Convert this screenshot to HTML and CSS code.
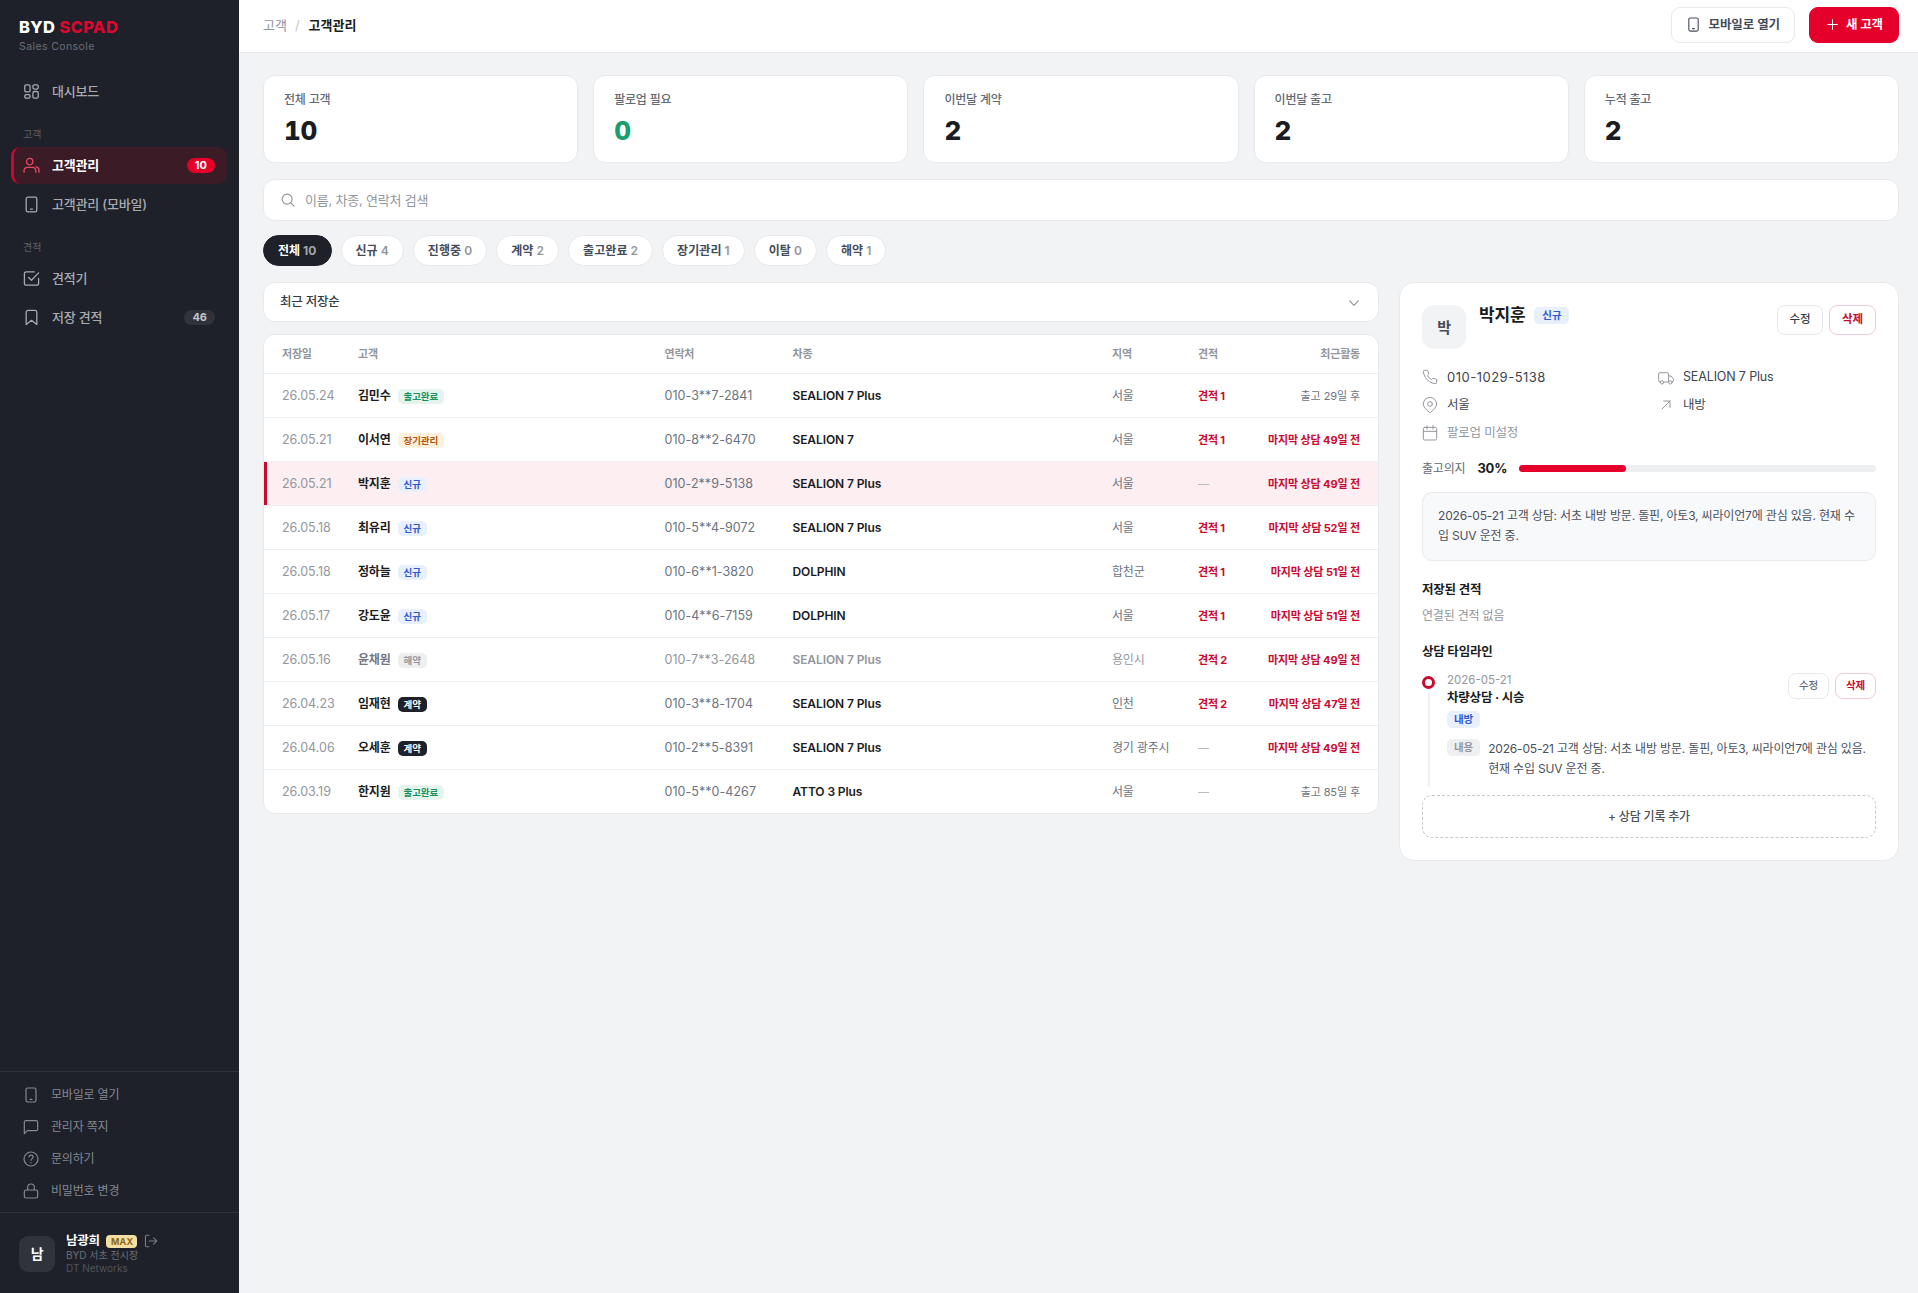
FILE: index.html
```html
<!DOCTYPE html>
<html lang="ko">
<head>
    <meta charset="UTF-8">
    <meta name="viewport" content="width=device-width, initial-scale=1.0">
    <title>고객관리 - BYD SCPAD</title>
    <link rel="stylesheet" href="styles.css">
</head>
<body>
    <svg class="sprite" width="0" height="0">
        <symbol id="i-dashboard" viewBox="0 0 24 24"><rect x="2.5" y="2.5" width="7.5" height="10" rx="2"/><rect x="14" y="2.5" width="7.5" height="6" rx="2"/><rect x="2.5" y="16.5" width="7.5" height="5" rx="2"/><rect x="14" y="12" width="7.5" height="9.5" rx="2"/></symbol>
        <symbol id="i-users" viewBox="0 0 24 24"><circle cx="9.5" cy="6.5" r="4.5"/><path d="M1.5 21.5V19A4.5 4.5 0 0 1 6 14.5h7.5A4.5 4.5 0 0 1 18 19v2.5"/><path d="M18.5 14c2.6.3 4 2 4 4.5v3"/></symbol>
        <symbol id="i-mobile" viewBox="0 0 24 24"><rect x="4.5" y="1.5" width="15" height="21" rx="2.5"/><path d="M10.5 18.500h3"/></symbol>
        <symbol id="i-check" viewBox="0 0 24 24"><path d="M8 10.5l4 4L22 4"/><path d="M22 12v7a2.5 2.5 0 0 1-2.5 2.500h-15A2.5 2.5 0 0 1 2 19V5a2.5 2.5 0 0 1 2.5-2.500H16"/></symbol>
        <symbol id="i-bookmark" viewBox="0 0 24 24"><path d="M19.5 22L12 16l-7.5 6V4.500A2.5 2.5 0 0 1 7 2h10a2.5 2.5 0 0 1 2.5 2.500z"/></symbol>
        <symbol id="i-chat" viewBox="0 0 24 24"><path d="M22 15.5a2 2 0 0 1-2 2H6.5L2 22V4.500a2 2 0 0 1 2-2h16a2 2 0 0 1 2 2z"/></symbol>
        <symbol id="i-help" viewBox="0 0 24 24"><circle cx="12" cy="12" r="10.5"/><path d="M9 9a3 3 0 0 1 6 .5c0 2-3 2.5-3 4.300M12 17.300v.2"/></symbol>
        <symbol id="i-lock" viewBox="0 0 24 24"><rect x="2" y="10.5" width="20" height="12" rx="2.5"/><path d="M7 10.500V6.500a5 5 0 0 1 10 0v4"/></symbol>
        <symbol id="i-logout" viewBox="0 0 24 24"><path d="M8.500 22H4.500a2 2 0 0 1-2-2V4a2 2 0 0 1 2-2h4M16.500 17.500L22 12l-5.500-5.500M22 12H9"/></symbol>
        <symbol id="i-search" viewBox="0 0 24 24"><circle cx="10.5" cy="10.5" r="8.5"/><path d="M22.500 22.500l-6-6"/></symbol>
        <symbol id="i-plus" viewBox="0 0 24 24"><path d="M12 3v18M3 12h18"/></symbol>
        <symbol id="i-chevron" viewBox="0 0 24 24"><path d="M4.500 8.500L12 16l7.500-7.500"/></symbol>
        <symbol id="i-phone" viewBox="0 0 24 24"><path d="M22 16.900v3a2 2 0 0 1-2.200 2 19.800 19.800 0 0 1-8.600-3.100 19.500 19.500 0 0 1-6-6A19.800 19.800 0 0 1 2.100 4.200 2 2 0 0 1 4.100 2h3a2 2 0 0 1 2 1.700c.1 1 .4 1.900.7 2.800a2 2 0 0 1-.5 2.100L8.100 9.900a16 16 0 0 0 6 6l1.300-1.300a2 2 0 0 1 2.100-.4c.9.3 1.800.6 2.800.7a2 2 0 0 1 1.700 2z"/></symbol>
        <symbol id="i-truck" viewBox="0 0 24 24"><path d="M3.500 18H3a2 2 0 0 1-2-2V6a2 2 0 0 1 2-2h11a2 2 0 0 1 2 2v12H8.500M16 9h3.500l3.500 4v3a2 2 0 0 1-1.500 2"/><circle cx="6" cy="18.5" r="2.5"/><circle cx="18.5" cy="18.5" r="2.5"/></symbol>
        <symbol id="i-pin" viewBox="0 0 24 24"><path d="M22 10.500c0 6.500-10 13-10 13s-10-6.500-10-13a10 10 0 0 1 20 0z"/><circle cx="12" cy="10.5" r="3.5"/></symbol>
        <symbol id="i-arrow" viewBox="0 0 24 24"><path d="M6 18L18 6M8.500 6H18v9.500"/></symbol>
        <symbol id="i-calendar" viewBox="0 0 24 24"><rect x="2" y="3.5" width="20" height="19" rx="2"/><path d="M2 9.500h20M7.500 1v5M16.500 1v5"/></symbol>
    </svg>

    <div class="app">
        <aside class="sidebar">
            <div class="logo">BYD <span>SCPAD</span></div>
            <div class="logo-sub">Sales Console</div>

            <nav class="nav">
                <a class="nav-item"><svg class="icon"><use href="#i-dashboard"/></svg>대시보드</a>
                <div class="nav-label">고객</div>
                <a class="nav-item active"><svg class="icon"><use href="#i-users"/></svg>고객관리<span class="count">10</span></a>
                <a class="nav-item"><svg class="icon"><use href="#i-mobile"/></svg>고객관리 (모바일)</a>
                <div class="nav-label">견적</div>
                <a class="nav-item"><svg class="icon"><use href="#i-check"/></svg>견적기</a>
                <a class="nav-item"><svg class="icon"><use href="#i-bookmark"/></svg>저장 견적<span class="count">46</span></a>
            </nav>

            <div class="side-links">
                <a><svg class="icon"><use href="#i-mobile"/></svg>모바일로 열기</a>
                <a><svg class="icon"><use href="#i-chat"/></svg>관리자 쪽지</a>
                <a><svg class="icon"><use href="#i-help"/></svg>문의하기</a>
                <a><svg class="icon"><use href="#i-lock"/></svg>비밀번호 변경</a>
            </div>

            <div class="profile">
                <div class="profile-avatar">남</div>
                <div>
                    <div class="profile-name">남광희 <span class="plan">MAX</span><svg class="icon"><use href="#i-logout"/></svg></div>
                    <div class="profile-org">BYD 서초 전시장</div>
                    <div class="profile-org dim">DT Networks</div>
                </div>
            </div>
        </aside>

        <main class="main">
            <header class="topbar">
                <div class="crumbs">고객<i>/</i><b>고객관리</b></div>
                <div class="topbar-actions">
                    <button class="btn-top"><svg class="icon"><use href="#i-mobile"/></svg>모바일로 열기</button>
                    <button class="btn-top primary"><svg class="icon"><use href="#i-plus"/></svg>새 고객</button>
                </div>
            </header>

            <div class="content">
                <section class="stats">
                    <div class="stat"><div class="stat-label">전체 고객</div><div class="stat-value">10</div></div>
                    <div class="stat"><div class="stat-label">팔로업 필요</div><div class="stat-value green">0</div></div>
                    <div class="stat"><div class="stat-label">이번달 계약</div><div class="stat-value">2</div></div>
                    <div class="stat"><div class="stat-label">이번달 출고</div><div class="stat-value">2</div></div>
                    <div class="stat"><div class="stat-label">누적 출고</div><div class="stat-value">2</div></div>
                </section>

                <div class="search"><svg class="icon"><use href="#i-search"/></svg>이름, 차종, 연락처 검색</div>

                <div class="filters">
                    <button class="pill on">전체 <span>10</span></button>
                    <button class="pill">신규 <span>4</span></button>
                    <button class="pill">진행중 <span>0</span></button>
                    <button class="pill">계약 <span>2</span></button>
                    <button class="pill">출고완료 <span>2</span></button>
                    <button class="pill">장기관리 <span>1</span></button>
                    <button class="pill">이탈 <span>0</span></button>
                    <button class="pill">해약 <span>1</span></button>
                </div>

                <div class="columns">
                    <div class="list">
                        <div class="sort">최근 저장순<svg class="icon"><use href="#i-chevron"/></svg></div>

                        <div class="table">
                            <div class="row head"><div>저장일</div><div>고객</div><div>연락처</div><div>차종</div><div>지역</div><div>견적</div><div>최근활동</div></div>
                            <div class="row"><div class="date">26.05.24</div><div class="name">김민수<span class="tag green">출고완료</span></div><div class="phone">010-3**7-2841</div><div class="model">SEALION 7 Plus</div><div class="region">서울</div><div class="quote">견적 1</div><div class="recent">출고 29일 후</div></div>
                            <div class="row"><div class="date">26.05.21</div><div class="name">이서연<span class="tag orange">장기관리</span></div><div class="phone">010-8**2-6470</div><div class="model">SEALION 7</div><div class="region">서울</div><div class="quote">견적 1</div><div class="recent late">마지막 상담 49일 전</div></div>
                            <div class="row selected"><div class="date">26.05.21</div><div class="name">박지훈<span class="tag blue">신규</span></div><div class="phone">010-2**9-5138</div><div class="model">SEALION 7 Plus</div><div class="region">서울</div><div class="quote none">—</div><div class="recent late">마지막 상담 49일 전</div></div>
                            <div class="row"><div class="date">26.05.18</div><div class="name">최유리<span class="tag blue">신규</span></div><div class="phone">010-5**4-9072</div><div class="model">SEALION 7 Plus</div><div class="region">서울</div><div class="quote">견적 1</div><div class="recent late">마지막 상담 52일 전</div></div>
                            <div class="row"><div class="date">26.05.18</div><div class="name">정하늘<span class="tag blue">신규</span></div><div class="phone">010-6**1-3820</div><div class="model">DOLPHIN</div><div class="region">합천군</div><div class="quote">견적 1</div><div class="recent late">마지막 상담 51일 전</div></div>
                            <div class="row"><div class="date">26.05.17</div><div class="name">강도윤<span class="tag blue">신규</span></div><div class="phone">010-4**6-7159</div><div class="model">DOLPHIN</div><div class="region">서울</div><div class="quote">견적 1</div><div class="recent late">마지막 상담 51일 전</div></div>
                            <div class="row closed"><div class="date">26.05.16</div><div class="name">윤채원<span class="tag gray">해약</span></div><div class="phone">010-7**3-2648</div><div class="model">SEALION 7 Plus</div><div class="region">용인시</div><div class="quote">견적 2</div><div class="recent late">마지막 상담 49일 전</div></div>
                            <div class="row"><div class="date">26.04.23</div><div class="name">임재현<span class="tag dark">계약</span></div><div class="phone">010-3**8-1704</div><div class="model">SEALION 7 Plus</div><div class="region">인천</div><div class="quote">견적 2</div><div class="recent late">마지막 상담 47일 전</div></div>
                            <div class="row"><div class="date">26.04.06</div><div class="name">오세훈<span class="tag dark">계약</span></div><div class="phone">010-2**5-8391</div><div class="model">SEALION 7 Plus</div><div class="region">경기 광주시</div><div class="quote none">—</div><div class="recent late">마지막 상담 49일 전</div></div>
                            <div class="row"><div class="date">26.03.19</div><div class="name">한지원<span class="tag green">출고완료</span></div><div class="phone">010-5**0-4267</div><div class="model">ATTO 3 Plus</div><div class="region">서울</div><div class="quote none">—</div><div class="recent">출고 85일 후</div></div>
                        </div>
                    </div>

                    <section class="detail">
                        <div class="detail-head">
                            <div class="avatar">박</div>
                            <div class="detail-name">박지훈<span class="tag large blue">신규</span></div>
                            <div class="detail-actions">
                                <button class="btn">수정</button>
                                <button class="btn danger">삭제</button>
                            </div>
                        </div>

                        <div class="info">
                            <div class="num"><svg class="icon"><use href="#i-phone"/></svg>010-1029-5138</div>
                            <div class="latin"><svg class="icon"><use href="#i-truck"/></svg>SEALION 7 Plus</div>
                            <div><svg class="icon"><use href="#i-pin"/></svg>서울</div>
                            <div><svg class="icon"><use href="#i-arrow"/></svg>내방</div>
                            <div class="empty"><svg class="icon"><use href="#i-calendar"/></svg>팔로업 미설정</div>
                        </div>

                        <div class="intent">
                            <span>출고의지</span>
                            <b>30%</b>
                            <div class="bar"><div class="bar-fill" style="width: 30%"></div></div>
                        </div>

                        <div class="memo">2026-05-21 고객 상담: 서초 내방 방문. 돌핀, 아토3, 씨라이언7에 관심 있음. 현재 수<br>입 SUV 운전 중.</div>

                        <h3>저장된 견적</h3>
                        <p class="no-quote">연결된 견적 없음</p>

                        <h3>상담 타임라인</h3>
                        <div class="timeline">
                            <div class="rail"><div class="dot"></div><div class="line"></div></div>
                            <div class="entry">
                                <div class="entry-head">
                                    <div>
                                        <div class="entry-date">2026-05-21</div>
                                        <div class="entry-title">차량상담 · 시승</div>
                                    </div>
                                    <div class="detail-actions">
                                        <button class="btn small">수정</button>
                                        <button class="btn small danger">삭제</button>
                                    </div>
                                </div>
                                <span class="tag large blue">내방</span>
                                <div class="entry-body">
                                    <span class="tag large gray">내용</span>
                                    <p>2026-05-21 고객 상담: 서초 내방 방문. 돌핀, 아토3, 씨라이언7에 관심 있음.<br>현재 수입 SUV 운전 중.</p>
                                </div>
                            </div>
                        </div>
                        <button class="add">+ 상담 기록 추가</button>
                    </section>
                </div>
            </div>
        </main>
    </div>
</body>
</html>
```

FILE: styles.css
```css
* {
    box-sizing: border-box;
    margin: 0;
    padding: 0;
}
body {
    font-family: Inter, "Noto Sans CJK KR", sans-serif;
    font-size: 13px;
    line-height: 1;
    color: #1a1c21;
    background: #f2f3f5;
    letter-spacing: -0.2px;
}
button {
    font: inherit;
    letter-spacing: inherit;
    color: inherit;
    background: #fff;
    border: 1px solid #e8e9ec;
    cursor: pointer;
}
.sprite {
    position: absolute;
}
.icon {
    width: 16px;
    height: 16px;
    flex: none;
    fill: none;
    stroke: currentColor;
    stroke-width: 1.8;
    stroke-linecap: round;
    stroke-linejoin: round;
}
.app {
    display: flex;
    height: 1293px;
}

/* sidebar */
.sidebar {
    width: 239px;
    flex: none;
    display: flex;
    flex-direction: column;
    background: #1e2129;
    color: #a9abb1;
}
.logo {
    padding: 19px 19px 0;
    height: 38px;
    font-size: 16.5px;
    line-height: 16px;
    font-weight: 800;
    letter-spacing: 0.35px;
    color: #fff;
}
.logo span {
    color: #d8082f;
}
.logo-sub {
    padding-left: 19px;
    height: 35px;
    font-size: 10.5px;
    line-height: 17px;
    letter-spacing: 0.4px;
    color: #6b6e77;
}
.nav {
    flex: 1;
    padding: 0 12px 0 11px;
}
.nav-item {
    display: flex;
    align-items: center;
    gap: 12px;
    height: 37px;
    margin-bottom: 2px;
    padding: 0 12px 0 9px;
    border-left: 3px solid transparent;
    border-radius: 9px;
    font-weight: 500;
}
.nav-item .icon {
    width: 17px;
    height: 17px;
}
.nav-item.active {
    background: #3a1b26;
    border-left-color: #c9092f;
    color: #fff;
    font-weight: 700;
}
.nav-item.active .icon {
    color: #ea4a68;
}
.nav-label {
    height: 35px;
    padding: 15px 0 0 12px;
    font-size: 10px;
    line-height: 14px;
    letter-spacing: 0;
    color: #5e616a;
}
.count {
    margin-left: auto;
    min-width: 28px;
    padding: 0 8px;
    border-radius: 8px;
    background: #30333c;
    font-size: 11px;
    line-height: 15px;
    font-weight: 700;
    letter-spacing: 0;
    text-align: center;
    color: #c3c5ca;
}
.active .count {
    background: #e4002b;
    color: #fff;
}
.side-links {
    padding: 7px 24px 5px 23px;
    border-top: 1px solid #2f3239;
}
.side-links a {
    display: flex;
    align-items: center;
    gap: 12px;
    height: 32px;
    font-size: 12px;
    color: #85888f;
}
.profile {
    display: flex;
    align-items: center;
    gap: 11px;
    height: 81px;
    padding: 2px 19px 0;
    border-top: 1px solid #2f3239;
}
.profile-avatar {
    display: grid;
    place-items: center;
    width: 36px;
    height: 36px;
    border-radius: 9px;
    background: #30333c;
    color: #fff;
    font-size: 14px;
    font-weight: 700;
}
.profile-name {
    display: flex;
    align-items: center;
    height: 15px;
    font-size: 12.5px;
    font-weight: 700;
    color: #fff;
}
.profile-name .icon {
    width: 14px;
    height: 14px;
    margin-left: 7px;
    color: #7d8088;
}
.plan {
    margin-left: 6px;
    padding: 0 4px 0 5px;
    border-radius: 4px;
    background: #f3dfa2;
    color: #8a6a17;
    font-size: 9px;
    line-height: 13px;
    font-weight: 700;
    letter-spacing: 0.2px;
}
.profile-org {
    font-size: 10px;
    line-height: 13px;
    letter-spacing: 0;
    color: #6b6e77;
}
.profile-org.dim {
    color: #50535c;
}

/* main */
.main {
    flex: 1;
    min-width: 0;
}
.topbar {
    display: flex;
    justify-content: space-between;
    align-items: center;
    height: 53px;
    padding: 0 19px 3px 24px;
    background: #fff;
    border-bottom: 1px solid #e8e9ec;
}
.crumbs {
    padding-top: 1px;
    letter-spacing: 0;
    color: #8f9299;
}
.crumbs i {
    margin: 0 9px 0 8px;
    font-style: normal;
    color: #c3c5ca;
}
.crumbs b {
    color: #1a1c21;
}
.topbar-actions {
    display: flex;
    gap: 14px;
}
.btn-top {
    display: flex;
    align-items: center;
    gap: 7px;
    height: 36px;
    padding: 1px 14px 0;
    border-radius: 9px;
    font-weight: 600;
    font-size: 12.5px;
    letter-spacing: -0.1px;
    color: #454c59;
}
.btn-top.primary {
    padding: 1px 15px 0 16px;
    border-color: #e4002b;
    background: #e4002b;
    color: #fff;
    font-weight: 700;
}
.btn-top .icon {
    width: 15px;
    height: 15px;
    margin-top: -2px;
}
.btn-top.primary .icon {
    width: 13px;
    height: 13px;
}
.content {
    padding: 22px 19px 0 24px;
}
.stats {
    display: grid;
    grid-template-columns: repeat(5, 1fr);
    gap: 15px;
}
.stat,
.search,
.sort,
.table,
.detail {
    background: #fff;
    border: 1px solid #e8e9ec;
    border-radius: 12px;
}
.stat {
    height: 88px;
    padding: 16px 20px;
}
.stat-label {
    font-size: 12px;
    line-height: 16px;
    font-weight: 500;
    color: #646a75;
}
.stat-value {
    margin-top: 9px;
    font-size: 26px;
    line-height: 28px;
    font-weight: 800;
    letter-spacing: -0.3px;
    font-variant-numeric: tabular-nums;
}
.stat-value.green {
    color: #17a06b;
}
.search {
    display: flex;
    align-items: center;
    gap: 10px;
    height: 42px;
    margin-top: 16px;
    padding: 0 18px 0 17px;
    color: #93969d;
}
.search .icon {
    width: 14px;
    height: 14px;
    stroke-width: 2;
}
.filters {
    display: flex;
    gap: 9px;
    margin-top: 14px;
}
.pill {
    height: 31px;
    padding: 0 14px;
    border-radius: 16px;
    font-size: 12px;
    font-weight: 600;
    letter-spacing: 0.06px;
    color: #454c59;
}
.pill span {
    color: #93969d;
}
.pill.on {
    border-color: #1e2129;
    background: #1e2129;
    color: #fff;
    font-weight: 700;
}
.pill.on span {
    color: #a5a6aa;
}
.columns {
    display: grid;
    grid-template-columns: 1fr 500px;
    align-items: start;
    gap: 20px;
    margin-top: 16px;
}

/* customer list */
.sort {
    display: flex;
    align-items: center;
    justify-content: space-between;
    height: 40px;
    margin-bottom: 12px;
    padding: 1px 17px 0 16px;
    font-size: 12.5px;
    font-weight: 500;
    color: #343b47;
}
.sort .icon {
    width: 14px;
    height: 14px;
    color: #93969d;
    stroke-width: 2;
}
.table {
    overflow: hidden;
}
.row {
    display: grid;
    grid-template-columns: 76px 306.5fr 128px 319.5fr 86px 62px 100px;
    align-items: center;
    height: 44px;
    padding: 1px 18px 0;
    border-top: 1px solid #eeeff1;
    font-size: 12.5px;
}
.row.head {
    height: 38px;
    padding-top: 0;
    border-top: 0;
    font-size: 11px;
    font-weight: 600;
    color: #93969d;
}
.row > div {
    white-space: nowrap;
}
.row > div:last-child {
    justify-self: end;
}
.row.selected {
    background: #fceef1;
    box-shadow: inset 3px 0 0 #c9092f;
}
.date {
    letter-spacing: 0;
    color: #93969d;
}
.name {
    display: flex;
    align-items: center;
    font-size: 12px;
    font-weight: 700;
}
.phone {
    letter-spacing: 0.05px;
    color: #6d737e;
}
.model {
    font-size: 12px;
    font-weight: 600;
    letter-spacing: -0.1px;
}
.region {
    font-size: 12px;
    color: #6d737e;
}
.quote {
    font-size: 11px;
    font-weight: 700;
    color: #c9092f;
}
.quote.none {
    font-weight: 400;
    color: #b9bbc0;
}
.recent {
    font-size: 11px;
    letter-spacing: -0.1px;
    color: #6d737e;
}
.recent.late {
    font-weight: 700;
    color: #c9092f;
}
.closed .name {
    color: #747780;
}
.closed .phone,
.closed .model,
.closed .region {
    color: #93969d;
}
.tag {
    display: inline-block;
    margin-left: 7px;
    padding: 0 6px;
    border-radius: 5px;
    font-size: 9.5px;
    line-height: 15px;
    font-weight: 700;
    letter-spacing: -0.1px;
}
.tag.large {
    padding: 0 8px;
    font-size: 10.5px;
    line-height: 17px;
    font-weight: 600;
}
.green.tag { background: #e5f5ee; color: #16925f; }
.orange.tag { background: #fdf0dd; color: #b4590f; }
.blue.tag { background: #e8effd; color: #3159cf; }
.gray.tag { background: #eeeff1; color: #93969d; }
.dark.tag { background: #1e2129; color: #fff; }

/* detail panel */
.detail {
    height: 579px;
    padding: 22px 22px 0 22px;
    border-radius: 15px;
}
.detail-head {
    display: flex;
    align-items: flex-start;
    height: 58px;
}
.avatar {
    display: grid;
    place-items: center;
    width: 44px;
    height: 44px;
    margin-right: 13px;
    border-radius: 12px;
    background: #f2f3f5;
    color: #454c59;
    font-size: 15px;
    font-weight: 700;
}
.detail-name {
    display: flex;
    align-items: center;
    height: 21px;
    font-size: 17px;
    font-weight: 700;
}
.detail-name .tag {
    margin-left: 9px;
}
.detail-actions {
    display: flex;
    gap: 6px;
    margin-left: auto;
}
.btn {
    width: 46px;
    height: 30px;
    border-radius: 8px;
    font-size: 11.5px;
    font-weight: 500;
    color: #343b47;
}
.btn.danger {
    width: 47px;
    border-color: #f0ccd4;
    color: #c9092f;
    font-weight: 700;
}
.btn.small {
    width: 41px;
    height: 26px;
    font-size: 10.5px;
}
.btn.small:not(.danger) {
    color: #646a75;
}
.info {
    display: grid;
    grid-template-columns: 236px 1fr;
    grid-auto-rows: 28px;
    font-size: 12.5px;
    color: #3d4450;
}
.info > div {
    display: flex;
    align-items: center;
    gap: 9px;
}
.info .icon {
    color: #93969d;
    stroke-width: 1.5;
}
.info .num {
    font-size: 13px;
    letter-spacing: 0.5px;
}
.info .latin {
    padding-top: 1px;
    letter-spacing: -0.15px;
}
.info .empty {
    color: #93969d;
}
.intent {
    display: flex;
    align-items: center;
    height: 43px;
    margin-bottom: 2px;
    font-size: 12px;
    color: #646a75;
}
.intent b {
    margin: 0 12px;
    font-size: 13px;
    color: #1a1c21;
}
.bar {
    flex: 1;
    height: 7px;
    border-radius: 4px;
    background: #eeeff1;
}
.bar-fill {
    height: 100%;
    border-radius: 4px;
    background: #e4002b;
}
.memo {
    height: 69px;
    padding: 13px 15px;
    border: 1px solid #e8eaee;
    border-radius: 10px;
    background: #f8f9fb;
    font-size: 12px;
    line-height: 20px;
    letter-spacing: -0.17px;
    white-space: nowrap;
    color: #4a505c;
}
h3 {
    margin-top: 20px;
    font-size: 12.5px;
    line-height: 18px;
}
.no-quote {
    margin-top: 8px;
    margin-bottom: -2px;
    font-size: 12px;
    line-height: 18px;
    color: #93969d;
}
.timeline {
    display: flex;
    gap: 12px;
    margin-top: 12px;
}
.rail {
    display: flex;
    flex-direction: column;
    align-items: center;
    gap: 4px;
    width: 13px;
    padding-top: 3px;
}
.dot {
    width: 13px;
    height: 13px;
    border: 3.5px solid #c9092f;
    border-radius: 50%;
}
.line {
    flex: 1;
    width: 2px;
    background: #eeeff1;
}
.entry {
    flex: 1;
    height: 114px;
}
.entry .tag {
    margin-left: 0;
    padding: 0 7px;
}
.entry-head {
    display: flex;
    height: 38px;
}
.entry-date {
    font-size: 11.5px;
    line-height: 15px;
    letter-spacing: 0;
    color: #93969d;
}
.entry-title {
    font-size: 12.5px;
    line-height: 19px;
    font-weight: 700;
}
.entry-body {
    display: flex;
    align-items: flex-start;
    gap: 8px;
    margin-top: 11px;
}
.entry-body p {
    font-size: 12px;
    line-height: 20px;
    letter-spacing: -0.17px;
    white-space: nowrap;
    color: #4a505c;
}
.add {
    display: block;
    width: 100%;
    height: 43px;
    margin-top: 8px;
    border: 1px dashed #c6c9ce;
    border-radius: 10px;
    font-size: 12px;
    font-weight: 500;
    color: #4a505c;
}
```
